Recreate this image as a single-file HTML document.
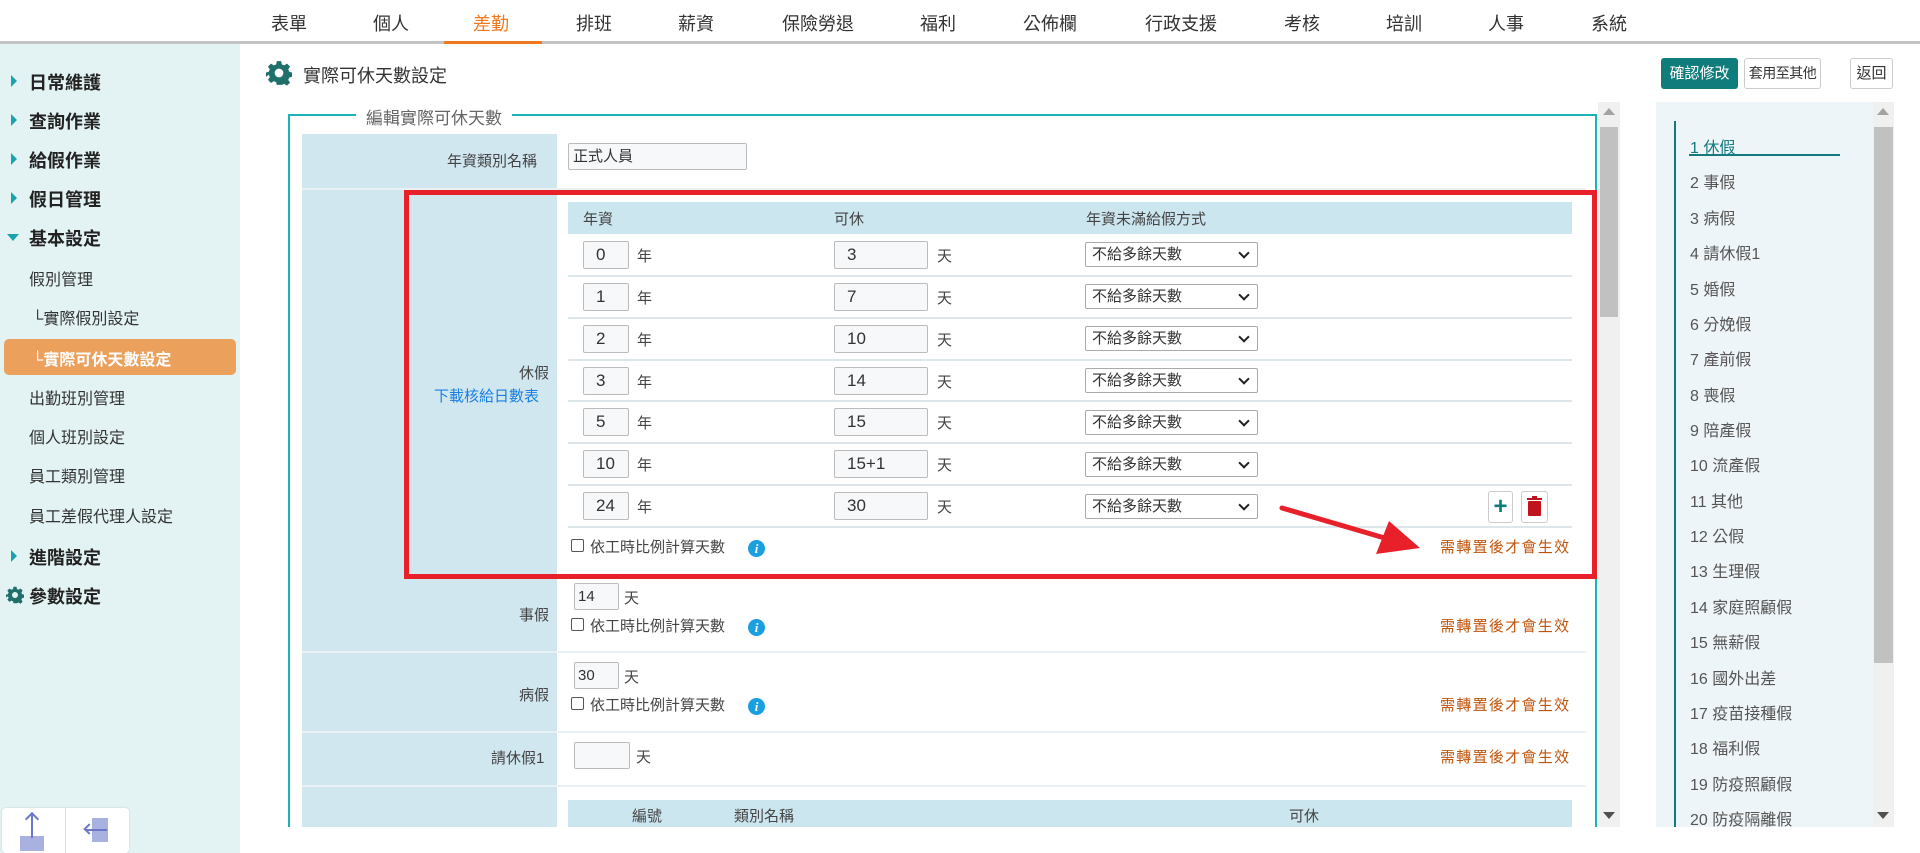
<!DOCTYPE html>
<html><head><meta charset="utf-8">
<style>
*{box-sizing:border-box;margin:0;padding:0}
body{width:1920px;height:853px;overflow:hidden;background:#fff;font-family:"Liberation Sans","Noto Sans CJK TC",sans-serif;color:#444;position:relative}
.a{position:absolute;white-space:nowrap}
.nav{font-size:18px;color:#333;top:10px;transform:translateX(-50%)}
.side{left:0;top:44px;width:240px;height:809px;background:#e3f3f4}
.top{font-size:18px;font-weight:bold;color:#222;left:29px}
.tri{left:11px;width:0;height:0;border-top:6px solid transparent;border-bottom:6px solid transparent;border-left:6px solid #1aa3ae}
.sub{font-size:16px;color:#333;left:29px}
.inp{border:1px solid #bbb;background:#f7f8fa;font-size:17px;color:#333;padding-left:12px;border-radius:2px}
.sel{border:1px solid #aaa;background:#fff;font-size:15px;color:#333;padding-left:6px;border-radius:2px;height:25px;width:173px;line-height:23px}
.sel:after{content:"";position:absolute;right:9px;top:6px;width:6px;height:6px;border-right:2px solid #222;border-bottom:2px solid #222;transform:rotate(45deg)}
.lbl{font-size:15px;color:#444}
.sep{height:2px;background:#dde6ea;left:568px;width:1004px}
.warn{font-size:15px;color:#c0560e;left:1440px;letter-spacing:1.3px}
.info{width:17px;height:17px;border-radius:50%;background:#1a9fe0;color:#fff;font-size:13px;font-weight:bold;font-style:italic;text-align:center;line-height:17px;font-family:"Liberation Serif",serif}
.cb{width:13px;height:13px;border:1px solid #555;border-radius:2px;background:#fff}
.ri{font-size:16px;color:#555;left:1690px}
</style></head><body>
<!-- top nav -->
<div class="a nav" style="left:289px">表單</div>
<div class="a nav" style="left:391px">個人</div>
<div class="a nav" style="left:491px;color:#f07820">差勤</div>
<div class="a nav" style="left:594px">排班</div>
<div class="a nav" style="left:696px">薪資</div>
<div class="a nav" style="left:818px">保險勞退</div>
<div class="a nav" style="left:938px">福利</div>
<div class="a nav" style="left:1050px">公佈欄</div>
<div class="a nav" style="left:1181px">行政支援</div>
<div class="a nav" style="left:1302px">考核</div>
<div class="a nav" style="left:1404px">培訓</div>
<div class="a nav" style="left:1506px">人事</div>
<div class="a nav" style="left:1609px">系統</div>
<div class="a" style="left:0;top:41px;width:1920px;height:3px;background:#c3c3c3"></div>
<div class="a" style="left:444px;top:41px;width:98px;height:3px;background:#f07820"></div>

<!-- sidebar -->
<div class="a side"></div>
<div class="a tri" style="top:75px"></div><div class="a top" style="top:69px">日常維護</div>
<div class="a tri" style="top:114px"></div><div class="a top" style="top:108px">查詢作業</div>
<div class="a tri" style="top:153px"></div><div class="a top" style="top:147px">給假作業</div>
<div class="a tri" style="top:192px"></div><div class="a top" style="top:186px">假日管理</div>
<div class="a" style="left:7px;top:234px;width:0;height:0;border-left:6px solid transparent;border-right:6px solid transparent;border-top:7px solid #1aa3ae"></div><div class="a top" style="top:225px">基本設定</div>
<div class="a sub" style="top:266px">假別管理</div>
<div class="a sub" style="top:305px;left:32px">└實際假別設定</div>
<div class="a" style="left:4px;top:339px;width:232px;height:36px;background:#eba05c;border-radius:5px"></div>
<div class="a sub" style="top:346px;left:32px;color:#fff;font-weight:bold">└實際可休天數設定</div>
<div class="a sub" style="top:385px">出勤班別管理</div>
<div class="a sub" style="top:424px">個人班別設定</div>
<div class="a sub" style="top:463px">員工類別管理</div>
<div class="a sub" style="top:503px">員工差假代理人設定</div>
<div class="a tri" style="top:550px"></div><div class="a top" style="top:544px">進階設定</div>
<svg class="a" style="left:6px;top:586px" width="18" height="18" viewBox="0 0 24 24"><path fill="#1f6f6a" d="M10 1h4l.6 3 2.2 1 2.6-1.7 2.8 2.8L20.5 8.7l1 2.3 2.5.5v4l-2.5.6-1 2.2 1.7 2.6-2.8 2.8-2.6-1.7-2.2 1L14 23h-4l-.6-2.5-2.2-1-2.6 1.7-2.8-2.8 1.7-2.6-1-2.2L0 15.5v-4l2.5-.5 1-2.3L1.8 6.1l2.8-2.8 2.6 1.7 2.2-1zM12 8a4 4 0 100 8 4 4 0 000-8z"/></svg><div class="a top" style="top:583px">參數設定</div>
<div class="a" style="left:2px;top:808px;width:127px;height:45px;background:#fff;border-radius:4px;box-shadow:0 0 2px #ccc"></div>
<div class="a" style="left:65px;top:808px;width:1px;height:45px;background:#ddd"></div>
<div class="a" style="left:20px;top:836px;width:24px;height:15px;background:#a9b1e0"></div>
<div class="a" style="left:31px;top:814px;width:2px;height:24px;background:#6b77c8"></div>
<div class="a" style="left:27px;top:814px;width:10px;height:10px;border-left:2px solid #6b77c8;border-top:2px solid #6b77c8;transform:rotate(45deg);transform-origin:center"></div>
<div class="a" style="left:92px;top:818px;width:16px;height:24px;background:#a9b1e0"></div>
<div class="a" style="left:85px;top:829px;width:22px;height:2px;background:#6b77c8"></div>
<div class="a" style="left:85px;top:825px;width:8px;height:8px;border-left:2px solid #6b77c8;border-bottom:2px solid #6b77c8;transform:rotate(45deg)"></div>

<!-- title -->
<svg class="a" style="left:266px;top:60px" width="26" height="26" viewBox="0 0 24 24"><path fill="#1f6f6a" d="M10 1h4l.6 3 2.2 1 2.6-1.7 2.8 2.8L20.5 8.7l1 2.3 2.5.5v4l-2.5.6-1 2.2 1.7 2.6-2.8 2.8-2.6-1.7-2.2 1L14 23h-4l-.6-2.5-2.2-1-2.6 1.7-2.8-2.8 1.7-2.6-1-2.2L0 15.5v-4l2.5-.5 1-2.3L1.8 6.1l2.8-2.8 2.6 1.7 2.2-1zM12 8a4 4 0 100 8 4 4 0 000-8z"/></svg>
<div class="a" style="left:303px;top:62px;font-size:18px;color:#333">實際可休天數設定</div>

<!-- buttons -->
<div class="a" style="left:1661px;top:58px;width:77px;height:31px;background:#117c7c;color:#fff;font-size:15px;text-align:center;line-height:31px;border-radius:3px">確認修改</div>
<div class="a" style="left:1744px;top:58px;width:77px;height:31px;border:1px solid #ccc;color:#333;font-size:14px;text-align:center;line-height:29px;border-radius:3px;letter-spacing:-0.5px">套用至其他</div>
<div class="a" style="left:1850px;top:58px;width:43px;height:31px;border:1px solid #ccc;color:#333;font-size:15px;text-align:center;line-height:29px;border-radius:3px">返回</div>

<!-- fieldset -->
<div class="a" style="left:288px;top:114px;width:1309px;height:714px;border:2px solid #1ab3b8;border-bottom:none"></div>
<div class="a" style="left:356px;top:104px;background:#fff;padding:0 10px;font-size:17px;color:#666">編輯實際可休天數</div>
<!-- scrollbar -->
<div class="a" style="left:1598px;top:102px;width:22px;height:725px;background:#f0f0f0"></div>
<div class="a" style="left:1600px;top:127px;width:18px;height:190px;background:#c1c1c1"></div>
<div class="a" style="left:1603px;top:108px;border-left:6px solid transparent;border-right:6px solid transparent;border-bottom:7px solid #a3a3a3"></div>
<div class="a" style="left:1603px;top:812px;border-left:6px solid transparent;border-right:6px solid transparent;border-top:7px solid #505050"></div>

<!-- label column -->
<div class="a" style="left:302px;top:134px;width:255px;height:693px;background:#d0e7f0"></div>
<div class="a" style="left:302px;top:188px;width:1284px;height:2px;background:#e8f1f4"></div>
<div class="a lbl" style="left:447px;top:150px">年資類別名稱</div>
<div class="a inp" style="left:568px;top:143px;width:179px;height:27px;font-size:15px;padding-left:4px;line-height:25px">正式人員</div>

<!-- inner table -->
<div class="a" style="left:568px;top:202px;width:1004px;height:32px;background:#cce6ef"></div>
<div class="a lbl" style="left:583px;top:208px">年資</div>
<div class="a lbl" style="left:834px;top:208px">可休</div>
<div class="a lbl" style="left:1086px;top:208px">年資未滿給假方式</div>

<div class="a inp" style="left:583px;top:241px;width:46px;height:28px;line-height:26px">0</div><div class="a lbl" style="left:637px;top:245px">年</div>
<div class="a inp" style="left:834px;top:241px;width:94px;height:28px;line-height:26px">3</div><div class="a lbl" style="left:937px;top:245px">天</div>
<div class="a sel" style="left:1085px;top:242px">不給多餘天數</div>
<div class="a sep" style="top:275px"></div>

<div class="a inp" style="left:583px;top:283px;width:46px;height:28px;line-height:26px">1</div><div class="a lbl" style="left:637px;top:287px">年</div>
<div class="a inp" style="left:834px;top:283px;width:94px;height:28px;line-height:26px">7</div><div class="a lbl" style="left:937px;top:287px">天</div>
<div class="a sel" style="left:1085px;top:284px">不給多餘天數</div>
<div class="a sep" style="top:317px"></div>

<div class="a inp" style="left:583px;top:325px;width:46px;height:28px;line-height:26px">2</div><div class="a lbl" style="left:637px;top:329px">年</div>
<div class="a inp" style="left:834px;top:325px;width:94px;height:28px;line-height:26px">10</div><div class="a lbl" style="left:937px;top:329px">天</div>
<div class="a sel" style="left:1085px;top:326px">不給多餘天數</div>
<div class="a sep" style="top:359px"></div>

<div class="a inp" style="left:583px;top:367px;width:46px;height:28px;line-height:26px">3</div><div class="a lbl" style="left:637px;top:371px">年</div>
<div class="a inp" style="left:834px;top:367px;width:94px;height:28px;line-height:26px">14</div><div class="a lbl" style="left:937px;top:371px">天</div>
<div class="a sel" style="left:1085px;top:368px">不給多餘天數</div>
<div class="a sep" style="top:400px"></div>

<div class="a inp" style="left:583px;top:408px;width:46px;height:28px;line-height:26px">5</div><div class="a lbl" style="left:637px;top:412px">年</div>
<div class="a inp" style="left:834px;top:408px;width:94px;height:28px;line-height:26px">15</div><div class="a lbl" style="left:937px;top:412px">天</div>
<div class="a sel" style="left:1085px;top:410px">不給多餘天數</div>
<div class="a sep" style="top:442px"></div>

<div class="a inp" style="left:583px;top:450px;width:46px;height:28px;line-height:26px">10</div><div class="a lbl" style="left:637px;top:454px">年</div>
<div class="a inp" style="left:834px;top:450px;width:94px;height:28px;line-height:26px">15+1</div><div class="a lbl" style="left:937px;top:454px">天</div>
<div class="a sel" style="left:1085px;top:452px">不給多餘天數</div>
<div class="a sep" style="top:484px"></div>

<div class="a inp" style="left:583px;top:492px;width:46px;height:28px;line-height:26px">24</div><div class="a lbl" style="left:637px;top:496px">年</div>
<div class="a inp" style="left:834px;top:492px;width:94px;height:28px;line-height:26px">30</div><div class="a lbl" style="left:937px;top:496px">天</div>
<div class="a sel" style="left:1085px;top:494px">不給多餘天數</div>
<div class="a" style="left:1488px;top:491px;width:25px;height:32px;border:1px solid #ccc;border-radius:3px;color:#117c7c;font-size:24px;font-weight:bold;text-align:center;line-height:29px">+</div>
<div class="a" style="left:1521px;top:491px;width:27px;height:32px;border:1px solid #ccc;border-radius:3px"></div>
<div class="a" style="left:1528px;top:501px;width:13px;height:15px;background:#c0141c;border-radius:1px"></div>
<div class="a" style="left:1527px;top:498px;width:15px;height:2px;background:#c0141c"></div>
<div class="a" style="left:1532px;top:496px;width:5px;height:2px;background:#c0141c"></div>
<div class="a sep" style="top:526px"></div>

<div class="a cb" style="left:571px;top:539px"></div>
<div class="a lbl" style="left:590px;top:536px">依工時比例計算天數</div>
<div class="a info" style="left:748px;top:540px">i</div>
<div class="a warn" style="top:536px">需轉置後才會生效</div>
<div class="a lbl" style="left:519px;top:362px">休假</div>
<div class="a lbl" style="left:434px;top:385px;color:#1a7fe0">下載核給日數表</div>

<!-- red box -->
<div class="a" style="left:404px;top:190px;width:1193px;height:389px;border:5px solid #e8202a"></div>
<svg class="a" style="left:1270px;top:495px" width="160" height="60"><line x1="12" y1="13" x2="118" y2="44" stroke="#e8202a" stroke-width="5" stroke-linecap="round"/><polygon points="150,53 106,59 119,26" fill="#e8202a"/></svg>

<!-- 事假 -->
<div class="a" style="left:302px;top:651px;width:1284px;height:2px;background:#e8f1f4"></div>
<div class="a lbl" style="left:519px;top:604px">事假</div>
<div class="a inp" style="left:574px;top:583px;width:45px;height:27px;font-size:15px;padding-left:3px;line-height:25px">14</div><div class="a lbl" style="left:624px;top:587px">天</div>
<div class="a cb" style="left:571px;top:618px"></div>
<div class="a lbl" style="left:590px;top:615px">依工時比例計算天數</div>
<div class="a info" style="left:748px;top:619px">i</div>
<div class="a warn" style="top:615px">需轉置後才會生效</div>

<!-- 病假 -->
<div class="a" style="left:302px;top:731px;width:1284px;height:2px;background:#e8f1f4"></div>
<div class="a lbl" style="left:519px;top:684px">病假</div>
<div class="a inp" style="left:574px;top:662px;width:45px;height:27px;font-size:15px;padding-left:3px;line-height:25px">30</div><div class="a lbl" style="left:624px;top:666px">天</div>
<div class="a cb" style="left:571px;top:697px"></div>
<div class="a lbl" style="left:590px;top:694px">依工時比例計算天數</div>
<div class="a info" style="left:748px;top:698px">i</div>
<div class="a warn" style="top:694px">需轉置後才會生效</div>

<!-- 請休假1 -->
<div class="a" style="left:302px;top:785px;width:1284px;height:2px;background:#e8f1f4"></div>
<div class="a lbl" style="left:491px;top:747px">請休假1</div>
<div class="a inp" style="left:574px;top:742px;width:56px;height:27px"></div><div class="a lbl" style="left:636px;top:746px">天</div>
<div class="a warn" style="top:746px">需轉置後才會生效</div>

<!-- last header -->
<div class="a" style="left:568px;top:800px;width:1004px;height:27px;background:#cce6ef"></div>
<div class="a lbl" style="left:632px;top:805px">編號</div>
<div class="a lbl" style="left:734px;top:805px">類別名稱</div>
<div class="a lbl" style="left:1289px;top:805px">可休</div>

<!-- right panel -->
<div class="a" style="left:1656px;top:102px;width:238px;height:725px;background:#eef5f8"></div>
<div class="a" style="left:1873px;top:102px;width:21px;height:725px;background:#f0f0f0"></div>
<div class="a" style="left:1874px;top:127px;width:19px;height:536px;background:#c1c1c1"></div>
<div class="a" style="left:1877px;top:108px;border-left:6px solid transparent;border-right:6px solid transparent;border-bottom:7px solid #a3a3a3"></div>
<div class="a" style="left:1877px;top:812px;border-left:6px solid transparent;border-right:6px solid transparent;border-top:7px solid #505050"></div>
<div class="a" style="left:1674px;top:121px;width:2px;height:706px;background:#157a80"></div>
<div class="a" style="left:1689px;top:154px;width:151px;height:2px;background:#157a80"></div>
<div class="a ri" style="top:134px;color:#157a80">1 休假</div>
<div class="a ri" style="top:169px">2 事假</div>
<div class="a ri" style="top:205px">3 病假</div>
<div class="a ri" style="top:240px">4 請休假1</div>
<div class="a ri" style="top:276px">5 婚假</div>
<div class="a ri" style="top:311px">6 分娩假</div>
<div class="a ri" style="top:346px">7 產前假</div>
<div class="a ri" style="top:382px">8 喪假</div>
<div class="a ri" style="top:417px">9 陪產假</div>
<div class="a ri" style="top:452px">10 流產假</div>
<div class="a ri" style="top:488px">11 其他</div>
<div class="a ri" style="top:523px">12 公假</div>
<div class="a ri" style="top:558px">13 生理假</div>
<div class="a ri" style="top:594px">14 家庭照顧假</div>
<div class="a ri" style="top:629px">15 無薪假</div>
<div class="a ri" style="top:665px">16 國外出差</div>
<div class="a ri" style="top:700px">17 疫苗接種假</div>
<div class="a ri" style="top:735px">18 福利假</div>
<div class="a ri" style="top:771px">19 防疫照顧假</div>
<div class="a ri" style="top:806px">20 防疫隔離假</div>
<div class="a" style="top:827px;width:1679px;height:26px;background:#fff;left:241px"></div>
</body></html>
